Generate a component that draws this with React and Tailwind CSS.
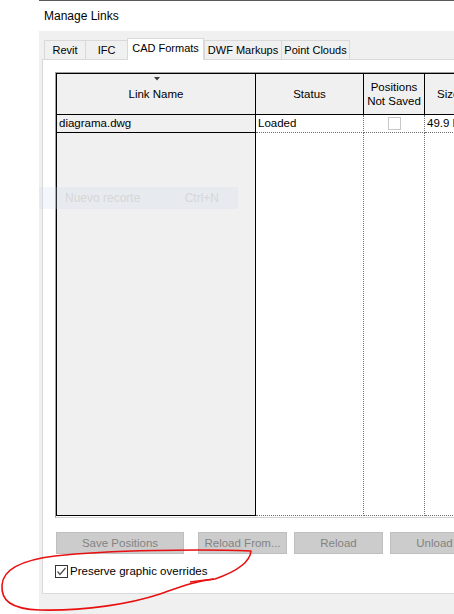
import React from "react";

const font = "font-['Liberation_Sans',Arial,sans-serif]";

function Tab({ label, width, active, last }) {
  if (active) {
    return (
      <div
        className={`relative z-10 -mb-px h-[22px] ${width} flex items-center justify-center pb-[3px] bg-white border-t border-l border-r border-[#d9d9d9]`}
      >
        {label}
      </div>
    );
  }
  return (
    <div
      className={`h-[19px] ${width} flex items-center justify-center bg-[#f0f0f0] border-t border-l border-[#d9d9d9] ${last ? "border-r" : ""}`}
    >
      {label}
    </div>
  );
}

function Button({ label, width }) {
  return (
    <div
      className={`h-[22px] ${width} shrink-0 flex items-center justify-center bg-[#cccccc] border border-[#bfbfbf] text-[#838383] text-[11.5px]`}
    >
      {label}
    </div>
  );
}

export default function App() {
  return (
    <div
      className={`relative w-[454px] h-[614px] overflow-hidden bg-white flex ${font} text-[11px] leading-[13px] text-black`}
    >
      {/* blank strip left of the dialog */}
      <div className="w-[39px] shrink-0 bg-white" />

      <div className="flex-1 min-w-0 flex flex-col border-t border-[#5a5a5a]">
        {/* title bar */}
        <div className="h-[30px] shrink-0 bg-white pl-[5px] pt-[8px] text-[12px] leading-[14px]">
          Manage Links
        </div>

        {/* dialog body */}
        <div className="flex-1 bg-[#f0f0f0] pl-[3px] pt-[7px] flex flex-col">
          {/* tab strip */}
          <div className="ml-[2px] h-[21px] flex items-end">
            <Tab label="Revit" width="w-[41px]" />
            <Tab label="IFC" width="w-[42px]" />
            <Tab label="CAD Formats" width="w-[77px]" active />
            <Tab label="DWF Markups" width="w-[77px]" />
            <Tab label="Point Clouds" width="w-[69px]" last />
          </div>

          {/* tab page */}
          <div className="w-[440px] h-[535px] shrink-0 bg-white border border-[#d9d9d9] pl-[12px] pt-[12px] flex flex-col">
            {/* links grid */}
            <div className="flex w-[440px] border-t border-l border-[#a0a0a0] border-b border-b-[#d0d0d0] pb-px">
              {/* Link Name column */}
              <div className="w-[200px] shrink-0 flex flex-col bg-[#f0f0f0] border-l border-r border-black">
                <div className="relative h-[42px] border-t border-b border-black flex items-center justify-center pt-px text-[11.5px]">
                  <svg
                    className="absolute top-[3px] left-[97px]"
                    width="6"
                    height="4"
                    viewBox="0 0 6 4"
                  >
                    <polygon points="0,0 6,0 3,3.5" fill="#3a3a3a" />
                  </svg>
                  Link Name
                </div>
                <div className="h-[18px] border-b border-black pl-[2px] flex items-center text-[11.5px]">
                  diagrama.dwg
                </div>
                <div className="h-[383px] border-b border-black" />
              </div>

              {/* Status column */}
              <div className="w-[108px] shrink-0 flex flex-col">
                <div className="h-[42px] border-t border-b border-r border-black bg-[#f0f0f0] flex items-center justify-center pt-px text-[11.5px]">
                  Status
                </div>
                <div className="h-[18px] border-b border-r border-dotted border-[#707070] pl-[2px] flex items-center text-[11.5px]">
                  Loaded
                </div>
                <div className="h-[383px] border-b border-r border-dotted border-[#707070]" />
              </div>

              {/* Positions Not Saved column */}
              <div className="w-[61px] shrink-0 flex flex-col">
                <div className="h-[42px] border-t border-b border-r border-black bg-[#f0f0f0] flex flex-col items-center justify-center text-[11.5px] leading-[14px] text-center">
                  <span>Positions</span>
                  <span>Not Saved</span>
                </div>
                <div className="h-[18px] border-b border-r border-dotted border-[#707070] flex items-center justify-center">
                  <div className="w-[13px] h-[13px] border border-[#c8c8c8] bg-white" />
                </div>
                <div className="h-[383px] border-b border-r border-dotted border-[#707070]" />
              </div>

              {/* Size column */}
              <div className="w-[70px] shrink-0 flex flex-col">
                <div className="h-[42px] border-t border-b border-black bg-[#f0f0f0] flex items-center pl-[12px] pt-px text-[11.5px]">
                  Size
                </div>
                <div className="h-[18px] border-b border-dotted border-[#707070] pl-[2px] flex items-center text-[11.5px] whitespace-nowrap">
                  49.9 KB
                </div>
                <div className="h-[383px] border-b border-dotted border-[#707070]" />
              </div>
            </div>

            {/* action buttons */}
            <div className="mt-[14px] ml-px flex">
              <Button label="Save Positions" width="w-[128px]" />
              <div className="w-[14px] shrink-0" />
              <Button label="Reload From..." width="w-[89px]" />
              <div className="w-[7px] shrink-0" />
              <Button label="Reload" width="w-[89px]" />
              <div className="w-[7px] shrink-0" />
              <Button label="Unload" width="w-[89px]" />
            </div>

            {/* option checkbox */}
            <div className="mt-[11px] flex items-center gap-[2px]">
              <div className="w-[13px] h-[13px] border border-[#333333] bg-white flex items-center justify-center">
                <svg width="11" height="11" viewBox="0 0 11 11">
                  <polyline
                    points="1.5,5.5 4,8.5 9.5,2"
                    fill="none"
                    stroke="#4a4a4a"
                    strokeWidth="1.2"
                  />
                </svg>
              </div>
              <span className="text-[11.5px]">Preserve graphic overrides</span>
            </div>
          </div>
        </div>
      </div>

      {/* faded context-menu item left on screen */}
      <div className="absolute left-[39px] top-[187px] w-[199px] h-[22px] bg-[rgba(200,220,240,0.22)] flex items-center text-[12px] text-[#d6d6d6]">
        <span className="ml-[26px]">Nuevo recorte</span>
        <span className="ml-auto mr-[19px]">Ctrl+N</span>
      </div>

      {/* red hand-drawn annotation */}
      <svg
        className="absolute left-0 top-0 pointer-events-none"
        width="454"
        height="614"
        viewBox="0 0 454 614"
      >
        <path
          d="M 251 551 C 200 549, 110 550, 55 556 C 22 560, 3 569, 2 585 C 1 600, 10 609, 40 610 C 85 611, 130 604, 160 594 C 180 587, 195 581, 215 579 C 235 572, 250 563, 251 551 Z"
          fill="none"
          stroke="#e81010"
          strokeWidth="1.6"
          strokeLinejoin="round"
        />
        <path d="M 190 582 L 214 579" fill="none" stroke="#e81010" strokeWidth="1.6" />
      </svg>
    </div>
  );
}
